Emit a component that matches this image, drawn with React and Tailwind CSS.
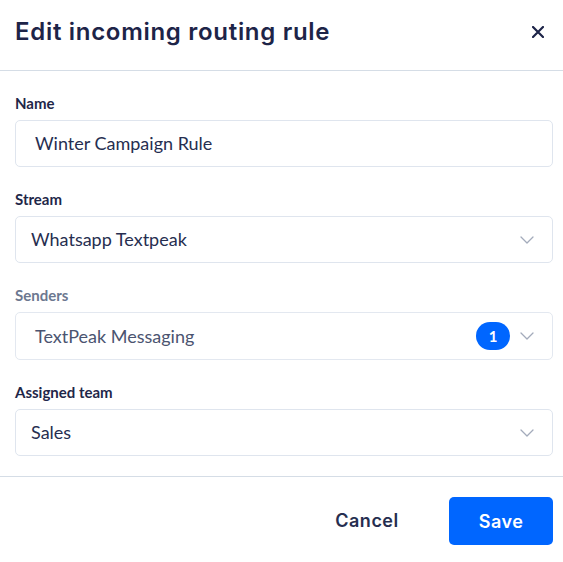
import React from "react";

const body = { fontFamily: "Lato, 'Noto Sans', sans-serif" };
const head = { fontFamily: "Inter, 'Noto Sans', sans-serif" };

function Chevron() {
  return (
    <svg width="14" height="8" viewBox="0 0 14 8" fill="none">
      <path d="M1 1l6 6 6-6" stroke="#a3abbb" strokeWidth="1.3" strokeLinecap="round" strokeLinejoin="round" />
    </svg>
  );
}

function Field({ label, muted, children }) {
  return (
    <div className="flex flex-col">
      <label
        className={`h-[20px] mb-[7px] text-[15px] font-bold leading-[20px] ${muted ? "text-[#6c7890]" : "text-[#1f2749]"}`}
      >
        {label}
      </label>
      {children}
    </div>
  );
}

export default function App() {
  return (
    <div className="w-[563px] h-[562px] bg-white flex flex-col" style={body}>
      <div className="h-[71px] flex items-center justify-between border-b border-[#d5dde6] pl-[15px] pr-[19px] pb-[6px]">
        <h1 className="text-[24px] font-semibold tracking-[0.7px] text-[#1d2448]" style={head}>
          Edit incoming routing rule
        </h1>
        <svg width="12" height="12" viewBox="0 0 12 12">
          <path d="M1 1l10 10M11 1L1 11" stroke="#1d2448" strokeWidth="2.2" strokeLinecap="round" />
        </svg>
      </div>

      <div className="flex flex-col gap-[22px] pl-[15px] pr-[10px] pt-[22px] pb-[20px] border-b border-[#d5dde6]">
        <Field label="Name">
          <div className="h-[47px] flex items-center rounded-[5px] border border-[#dfe5ee] pl-[19px] pr-[18px]">
            <span className="flex-1 text-[18px] text-[#262e50]">Winter Campaign Rule</span>
          </div>
        </Field>
        <Field label="Stream">
          <div className="h-[47px] flex items-center rounded-[5px] border border-[#dfe5ee] pl-[15px] pr-[18px]">
            <span className="flex-1 text-[18px] text-[#262e50]">Whatsapp Textpeak</span>
            <Chevron />
          </div>
        </Field>
        <Field label="Senders" muted>
          <div className="h-[48px] flex items-center rounded-[5px] border border-[#e3e8f0] pl-[19px] pr-[18px]">
            <span className="flex-1 text-[18px] text-[#4b5470]">TextPeak Messaging</span>
            <span className="mr-[10px] w-[34px] h-[28px] rounded-full bg-[#0066ff] text-white text-[15px] font-bold flex items-center justify-center">
              1
            </span>
            <Chevron />
          </div>
        </Field>
        <Field label="Assigned team">
          <div className="h-[47px] flex items-center rounded-[5px] border border-[#dfe5ee] pl-[15px] pr-[18px]">
            <span className="flex-1 text-[18px] text-[#262e50]">Sales</span>
            <Chevron />
          </div>
        </Field>
      </div>

      <div className="flex justify-end items-start gap-[30px] pt-[20px] pl-[15px] pr-[10px]" style={head}>
        <button className="w-[104px] h-[47px] text-[18px] font-semibold tracking-[0.5px] text-[#262e50]">Cancel</button>
        <button className="w-[104px] h-[48px] rounded-[5px] bg-[#0066ff] text-white text-[18px] font-semibold tracking-[0.5px]">
          Save
        </button>
      </div>
    </div>
  );
}
